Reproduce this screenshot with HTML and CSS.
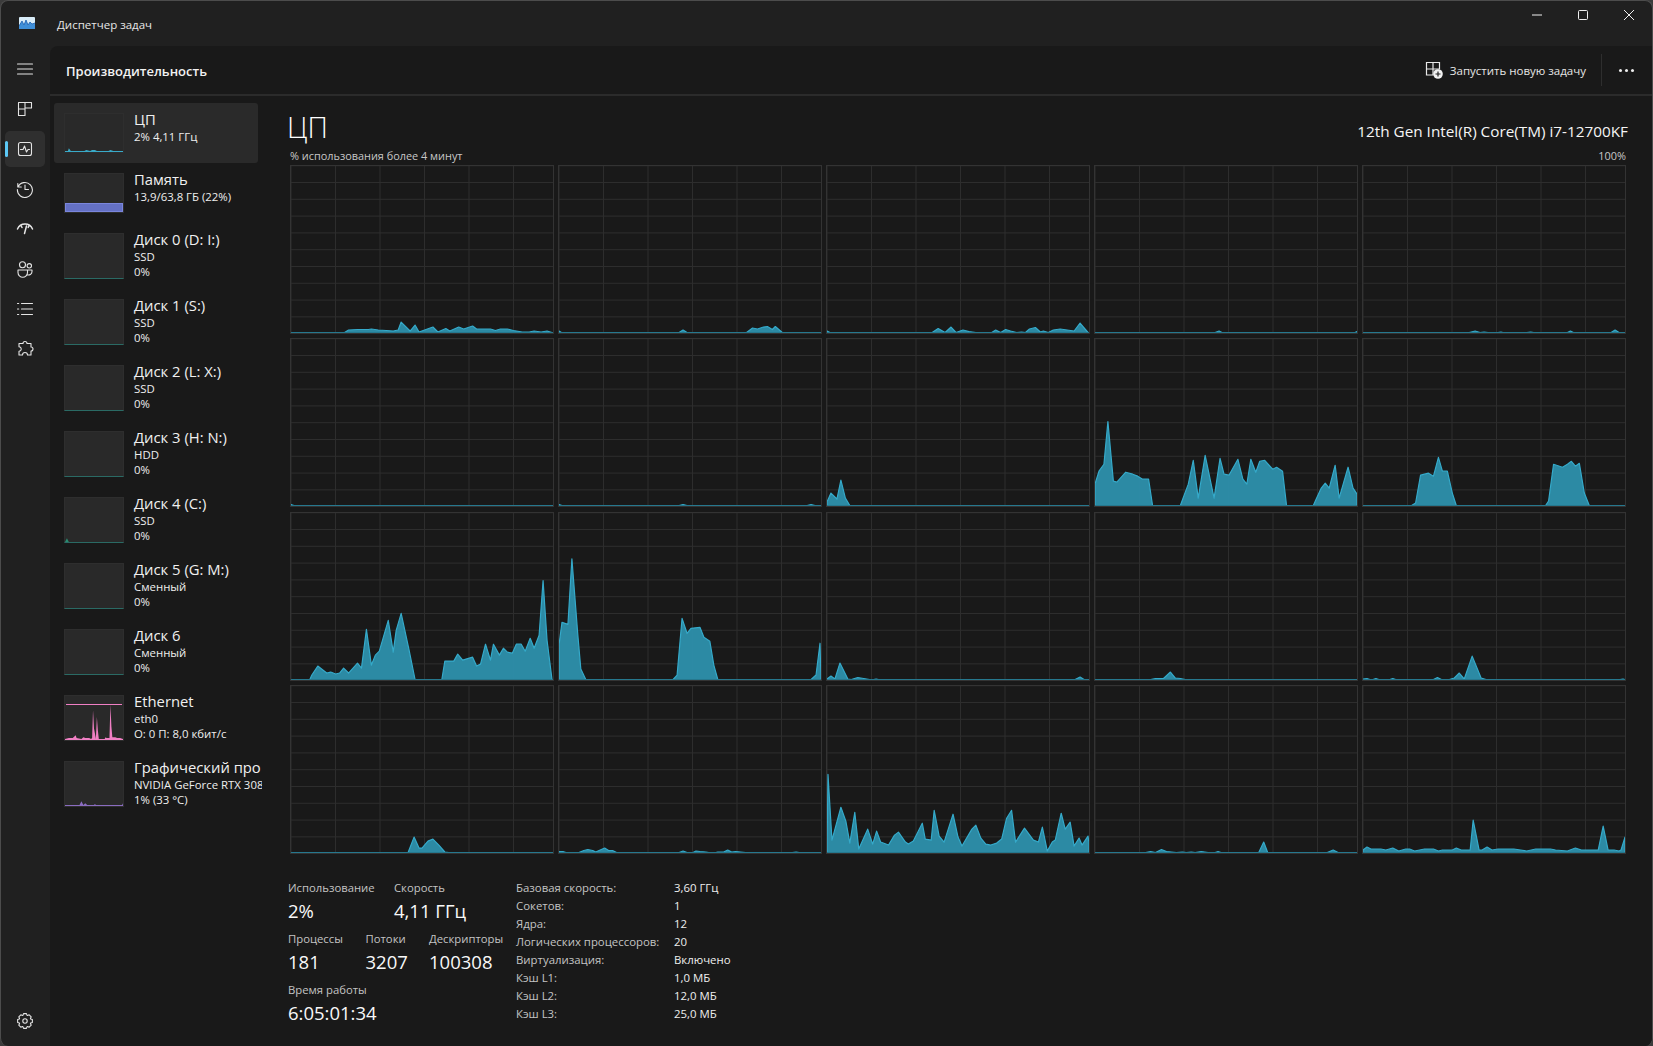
FILE: index.html
```html
<!DOCTYPE html>
<html lang="ru">
<head>
<meta charset="utf-8">
<title>Диспетчер задач</title>
<link rel="stylesheet" href="styles.css">
</head>
<body>
<div class="window">
  <header class="titlebar">
    <svg class="app-icon" viewBox="0 0 16 12"><rect width="16" height="12" rx="1" fill="#d8ecf8"/><path d="M0 9 3 4l2 4 2-5 2 5 2-3 2 2 3-1v6H0z" fill="#3f8fd8"/><path d="M0 9 3 4l2 4 2-5 2 5 2-3 2 2 3-1" fill="none" stroke="#1d5fb0" stroke-width=".8"/></svg>
    <span class="app-title">Диспетчер задач</span>
    <div class="win-controls">
      <svg class="win-btn" viewBox="0 0 12 12"><path d="M1 6h10" /></svg>
      <svg class="win-btn" viewBox="0 0 12 12"><rect x="1.500" y="1.500" width="9" height="9" rx="1"/></svg>
      <svg class="win-btn" viewBox="0 0 12 12"><path d="M1 1l10 10M11 1 1 11"/></svg>
    </div>
  </header>
  <div class="body">
    <nav class="nav">
      <svg class="nav-icon" viewBox="0 0 20 20"><path d="M2.500 5h15M2.500 10h15M2.500 15h15"/></svg>
      <svg class="nav-icon" viewBox="0 0 20 20"><path d="M3.500 3.500h13v5.500h-6.500v7.500h-6.500zM3.500 10h6.500M10 3.500v6.500"/></svg>
      <div class="nav-active">
        <svg class="nav-icon" viewBox="0 0 20 20"><rect x="3.500" y="3.500" width="13" height="13" rx="2"/><path d="M5.500 10.500h2.500l1.500-3.500 2 6 1.500-2.500h1.500"/></svg>
      </div>
      <svg class="nav-icon" viewBox="0 0 20 20"><path d="M2.800 4.500v3.500h3.500M3 8a7.500 7.500 0 1 1-.6 2.500M10 6v4.500h3.500"/></svg>
      <svg class="nav-icon nav-thick" viewBox="0 0 20 20"><path d="M2.500 10c1.500-3.500 4.500-5 7.500-5s6 1.500 7.500 5M9.500 14.500l2-7.500M6 6.500l1 2M14 6.500l-.8 2"/></svg>
      <svg class="nav-icon" viewBox="0 0 20 20"><circle cx="7.500" cy="5.800" r="3"/><circle cx="14.300" cy="6.800" r="2.200"/><path d="M3 11h9.500v2.500a4.500 4.500 0 0 1-9.500 0zM12.500 11h4.500v1.500a3.500 3.500 0 0 1-5 3.200"/></svg>
      <svg class="nav-icon" viewBox="0 0 20 20"><path d="M6.500 4.500h11M6.500 10h11M6.500 15.500h11M2.500 4.500h1.200M2.500 10h1.200M2.500 15.500h1.200"/></svg>
      <svg class="nav-icon" viewBox="0 0 20 20"><path d="M8 4.500a2 2 0 1 1 4 0h4v3.500a2 2 0 1 1 0 4v4h-3.500a2.500 2.500 0 0 0-5 0h-3.500v-3.800a2.200 2.200 0 1 0 0-4.400v-3.300z"/></svg>
      <svg class="nav-icon nav-settings" viewBox="0 0 20 20"><polygon points="17.36,8.57 17.36,11.43 15.64,12.05 15.44,12.54 16.22,14.19 14.19,16.22 12.54,15.44 12.05,15.64 11.43,17.36 8.57,17.36 7.95,15.64 7.46,15.44 5.81,16.22 3.78,14.19 4.56,12.54 4.36,12.05 2.64,11.43 2.64,8.57 4.36,7.95 4.56,7.46 3.78,5.81 5.81,3.78 7.46,4.56 7.95,4.36 8.57,2.64 11.43,2.64 12.05,4.36 12.54,4.56 14.19,3.78 16.22,5.81 15.44,7.46 15.64,7.95"/><circle cx="10" cy="10" r="2.200"/></svg>
    </nav>
    <main class="content">
      <div class="topbar">
        <h1 class="page-title">Производительность</h1>
        <button class="run-task">
          <svg class="run-icon" viewBox="0 0 18 18"><path d="M1.500 1.500h13v6.500h-6.500v6h-6.500zM1.500 8h6.500M8 1.500v6.500" fill="none" stroke="#e8e8e8" stroke-width="1.200"/><circle cx="13" cy="13" r="4.800" fill="#f2f2f2"/><path d="M13 10.500v5M10.500 13h5" stroke="#222" stroke-width="1.200"/></svg>
          Запустить новую задачу
        </button>
        <span class="topbar-sep"></span>
        <span class="dots"><i></i><i></i><i></i></span>
      </div>
      <div class="panes">
        <aside class="list">
          <div class="item item-selected">
            <div class="thumb thumb-short"><svg class="plot" viewBox="0 0 60 40" preserveAspectRatio="none"><polygon class="th-cpu" points="0,0 0,1 3,1 4,4 6,1 20,1 22,2 26,1 28,2 31,2 33,1 45,1 47,2 50,1 60,1 60,0"/></svg></div>
            <div class="item-text"><div class="item-name">ЦП</div><div class="item-sub">2% 4,11 ГГц</div></div>
          </div>
          <div class="item">
            <div class="thumb thumb-short"><div class="mem-fill"></div></div>
            <div class="item-text"><div class="item-name">Память</div><div class="item-sub">13,9/63,8 ГБ (22%)</div></div>
          </div>
          <div class="item">
            <div class="thumb thumb-disk"></div>
            <div class="item-text"><div class="item-name">Диск 0 (D: I:)</div><div class="item-sub">SSD</div><div class="item-sub">0%</div></div>
          </div>
          <div class="item">
            <div class="thumb thumb-disk"></div>
            <div class="item-text"><div class="item-name">Диск 1 (S:)</div><div class="item-sub">SSD</div><div class="item-sub">0%</div></div>
          </div>
          <div class="item">
            <div class="thumb thumb-disk"></div>
            <div class="item-text"><div class="item-name">Диск 2 (L: X:)</div><div class="item-sub">SSD</div><div class="item-sub">0%</div></div>
          </div>
          <div class="item">
            <div class="thumb thumb-disk"></div>
            <div class="item-text"><div class="item-name">Диск 3 (H: N:)</div><div class="item-sub">HDD</div><div class="item-sub">0%</div></div>
          </div>
          <div class="item">
            <div class="thumb thumb-disk"><svg class="plot" viewBox="0 0 60 46" preserveAspectRatio="none"><polygon class="th-disk" points="0,0 2,4 4,0"/></svg></div>
            <div class="item-text"><div class="item-name">Диск 4 (C:)</div><div class="item-sub">SSD</div><div class="item-sub">0%</div></div>
          </div>
          <div class="item">
            <div class="thumb thumb-disk"></div>
            <div class="item-text"><div class="item-name">Диск 5 (G: M:)</div><div class="item-sub">Сменный</div><div class="item-sub">0%</div></div>
          </div>
          <div class="item">
            <div class="thumb thumb-disk"></div>
            <div class="item-text"><div class="item-name">Диск 6</div><div class="item-sub">Сменный</div><div class="item-sub">0%</div></div>
          </div>
          <div class="item">
            <div class="thumb"><div class="eth-line"></div><svg class="plot" viewBox="0 0 60 46" preserveAspectRatio="none"><polygon class="th-eth" points="0,0 0,1 4,2 8,2 10,4 11,5 12,2 17,1 19,3 21,2 25,2 27,1 28,2 28,1 29,31 30,12 32,1 32,3 33,24 34,10 35,1 41,1 42,3 43,2 46,2 47,37 48,14 49,3 52,3 54,2 57,2 60,1 60,0"/></svg></div>
            <div class="item-text"><div class="item-name">Ethernet</div><div class="item-sub">eth0</div><div class="item-sub">О: 0 П: 8,0 кбит/с</div></div>
          </div>
          <div class="item">
            <div class="thumb"><svg class="plot" viewBox="0 0 60 46" preserveAspectRatio="none"><polygon class="th-gpu" points="0,0 0,1 15,1 17,5 19,1 21,3 23,1 30,1 31,2 32,1 59,1 60,3 60,0"/></svg></div>
            <div class="item-text"><div class="item-name">Графический про</div><div class="item-sub">NVIDIA GeForce RTX 308</div><div class="item-sub">1% (33 °C)</div></div>
          </div>
        </aside>
        <section class="detail">
          <div class="detail-head">
            <h2 class="detail-title">ЦП</h2>
            <span class="cpu-name">12th Gen Intel(R) Core(TM) i7-12700KF</span>
          </div>
          <div class="chart-caption"><span>% использования более 4 минут</span><span>100%</span></div>
          <div class="charts">
            <div class="chart"><svg class="plot" viewBox="0 0 264 168" preserveAspectRatio="none"><polygon points="0,0 0,.5 54,.5 58,3 67,3.5 78,3.5 81,4 88,3 96,2.500 103,2 108,3 111,11 120,2 125,8 129,1 143,6 148,1 156,4.500 160,2 169,6 174,4 183,7 187,4 201,4 206,2.500 211,4 218,4 224,2.500 233,1 240,1 245,2 252,1 258,2 264,0"/></svg></div>
            <div class="chart"><svg class="plot" viewBox="0 0 264 168" preserveAspectRatio="none"><polygon points="0,0 0,2 2.500,.5 121,.5 125,3 129,.5 189,.5 195,5 200,4 206,6 210,6.500 215,3.500 218,6.500 225,.5 264,.5 264,0"/></svg></div>
            <div class="chart"><svg class="plot" viewBox="0 0 264 168" preserveAspectRatio="none"><polygon points="0,0 0,2 3,.5 106,.5 112,4.500 119,.5 125,6 130,.5 137,3 143,1.500 150,.5 166,.5 170,3 175,.5 180,3.500 185,2 191,.5 196,1 200,.5 204,4 210,5.500 215,1 218,2 223,.5 228,3 235,4 242,3 249,2 255,10 263,.5 264,0"/></svg></div>
            <div class="chart"><svg class="plot" viewBox="0 0 264 168" preserveAspectRatio="none"><polygon points="0,0 0,.5 121,.5 125,2 128,.5 262,.5 264,1.500 264,0"/></svg></div>
            <div class="chart"><svg class="plot" viewBox="0 0 264 168" preserveAspectRatio="none"><polygon points="0,0 0,.5 107,.5 113,2 118,.5 122,1 126,.5 136,.5 139,1 141,.5 165,.5 169,1 172,.5 206,.5 209,2 212,.5 250,.5 254,3 258,.5 264,.5 264,0"/></svg></div>

            <div class="chart"><svg class="plot" viewBox="0 0 264 168" preserveAspectRatio="none"><polygon points="0,0 0,1.500 3,.5 264,.5 264,0"/></svg></div>
            <div class="chart"><svg class="plot" viewBox="0 0 264 168" preserveAspectRatio="none"><polygon points="0,0 0,1.500 3,.5 121,.5 125,1.500 129,.5 250,.5 254,1.500 258,.5 264,.5 264,0"/></svg></div>
            <div class="chart"><svg class="plot" viewBox="0 0 264 168" preserveAspectRatio="none"><polygon points="0,0 0,4 4,13 10,7 14,26 18.500,8 23,.5 264,.5 264,0"/></svg></div>
            <div class="chart"><svg class="plot" viewBox="0 0 264 168" preserveAspectRatio="none"><polygon points="0,0 0,22 4,35 9,42 13,85 18.500,25 22,24 31,34 38,32 43,30 48,27 54,27 58,.5 86,.5 94,22 99,46 104,8 111,51 120,8 126,48 130,32 135,31 144,47 149,27 153,22 157,47 162,34 166,45 171,46 179,37 183,39 189,35 193,.5 220,.5 222,5 228,18 232,23 236,18 242,41 246,8 255,39 260,18 264,12 264,0"/></svg></div>
            <div class="chart"><svg class="plot" viewBox="0 0 264 168" preserveAspectRatio="none"><polygon points="0,0 0,.5 49,.5 53,3 58,31 66,33 71,30 76,49 80,35 85,35 90,13 94,.5 184,.5 187,5 192,42 201,39 206,42 210,45 214,40 218,43 223,13 228,.5 264,.5 264,0"/></svg></div>

            <div class="chart"><svg class="plot" viewBox="0 0 264 168" preserveAspectRatio="none"><polygon points="0,0 0,.5 19,.5 21,5 27,14 36,7 40,8 45,6 49,7 53,12 58,7 67,17 71,12 76,51 81,15 85,25 89,29 98,60 103,28 106,50 111,67 119,30 125,.5 152,.5 155,19 164,19 168,26 173,20 183,23 187,14 191,16 196,36 201,20 204,36 210,25 214,32 218,28 223,27 227,36 232,36 236,29 241,42 245,32 250,45 254,100 258,40 263,.5 264,0"/></svg></div>
            <div class="chart"><svg class="plot" viewBox="0 0 264 168" preserveAspectRatio="none"><polygon points="0,0 0,35 3,58 9,56 13,122 19,45 22,11 27,.5 115,.5 119,5 124,62 129,47 133,52 142,53 146,43 152,39 156,15 160,.5 254,.5 259,5 263,37 264,0"/></svg></div>
            <div class="chart"><svg class="plot" viewBox="0 0 264 168" preserveAspectRatio="none"><polygon points="0,0 0,1 4,4 8,1 13,17 21,1 24.500,.5 31,2.500 37,1.500 43,.5 47,.5 49.500,1 52,.5 250,.5 255,3 259,.5 264,.5 264,0"/></svg></div>
            <div class="chart"><svg class="plot" viewBox="0 0 264 168" preserveAspectRatio="none"><polygon points="0,0 0,.5 56,.5 61,1.500 69,1.500 76,8 81,2 86,1.500 91,.5 264,.5 264,0"/></svg></div>
            <div class="chart"><svg class="plot" viewBox="0 0 264 168" preserveAspectRatio="none"><polygon points="0,0 0,1 4,1.500 7,.5 10,.5 13,1.500 16,.5 27,.5 30,1.500 33,.5 71,.5 75,2.500 79,.5 87,.5 92,2 97,7 102,1 110,24 119,2 124,.5 259,.5 262,1 264,.5 264,0"/></svg></div>

            <div class="chart"><svg class="plot" viewBox="0 0 264 168" preserveAspectRatio="none"><polygon points="0,0 0,.5 118,.5 124,16 129,5 132,5 138,12 143,14 149,8 155,1 159,.5 264,.5 264,0"/></svg></div>
            <div class="chart"><svg class="plot" viewBox="0 0 264 168" preserveAspectRatio="none"><polygon points="0,0 0,1.500 4,1.500 7,.5 20,.5 25,2.500 29,3.500 34,2.500 37,1 46,5 50,2.500 54,2.500 58,.5 121,.5 125,2 129,.5 135,.5 138,2 142,1.500 148,1 151,.5 158,.5 160,1 166,1 170,3 174,1 178,1.500 183,1 188,.5 235,.5 239,1 242,.5 264,.5 264,0"/></svg></div>
            <div class="chart"><svg class="plot" viewBox="0 0 264 168" preserveAspectRatio="none"><polygon points="0,0 1,79 5,13 14,46 19,32 23,10 28,41 32,4 41,24 46,9 50,22 54,11 62,8 68,18 72,21 79,11 82,9 87,12 96,30 99,14 105,13 108,43 113,17 118,11 127,39 132,16 136,7 146,24 150,28 155,15 160,9 165,8 171,10 176,14 181,35 186,43 190,11 199,25 208,13 213,11 217,26 222,2 227,11 230,13 236,40 240,24 245,31 249,7 254,15 257,8 263,17 264,10 264,0"/></svg></div>
            <div class="chart"><svg class="plot" viewBox="0 0 264 168" preserveAspectRatio="none"><polygon points="0,0 0,.5 51,.5 56,1.500 61,.5 67,3.500 72,1.500 77,1 82,.5 88,1 92,.5 97,1 101,.5 107,1.500 114,.5 121,.5 124,1.500 127,.5 165,.5 170,11 174,.5 234,.5 240,3 245,.5 264,.5 264,0"/></svg></div>
            <div class="chart"><svg class="plot" viewBox="0 0 264 168" preserveAspectRatio="none"><polygon points="0,0 0,3 4,6 8,4 18,4 23,3 30,5 36,2 43,4 47,4 52,2 62,4 71,4 76,2 80,3 90,3 94,5 99,3 108,3 111,33 117,3 120,3 125,6 130,3 136,4 152,4 165,2 174,4 189,4 194,3 206,2 214,5 220,3 237,3 242,27 247,3 253,3 258,2 260,3 264,16 264,0"/></svg></div>
          </div>
          <div class="stats">
            <div class="metrics">
              <div class="metric-row">
                <div class="metric m-usage"><div class="metric-label">Использование</div><div class="metric-value">2%</div></div>
                <div class="metric"><div class="metric-label">Скорость</div><div class="metric-value">4,11 ГГц</div></div>
              </div>
              <div class="metric-row">
                <div class="metric m-proc"><div class="metric-label">Процессы</div><div class="metric-value">181</div></div>
                <div class="metric m-thread"><div class="metric-label">Потоки</div><div class="metric-value">3207</div></div>
                <div class="metric"><div class="metric-label">Дескрипторы</div><div class="metric-value">100308</div></div>
              </div>
              <div class="metric-row">
                <div class="metric"><div class="metric-label">Время работы</div><div class="metric-value">6:05:01:34</div></div>
              </div>
            </div>
            <dl class="specs">
              <dt>Базовая скорость:</dt><dd>3,60 ГГц</dd>
              <dt>Сокетов:</dt><dd>1</dd>
              <dt>Ядра:</dt><dd>12</dd>
              <dt>Логических процессоров:</dt><dd>20</dd>
              <dt>Виртуализация:</dt><dd>Включено</dd>
              <dt>Кэш L1:</dt><dd>1,0 МБ</dd>
              <dt>Кэш L2:</dt><dd>12,0 МБ</dd>
              <dt>Кэш L3:</dt><dd>25,0 МБ</dd>
            </dl>
          </div>
        </section>
      </div>
    </main>
  </div>
</div>
</body>
</html>
```
FILE: styles.css
```css
* { box-sizing: border-box; }
html, body { margin: 0; height: 100%; background: #3b3b3b; overflow: hidden; }
body { font-family: "Open Sans", "Noto Sans", sans-serif; color: #fff; }

.window {
  width: 1653px; height: 1046px;
  display: flex; flex-direction: column;
  background: #202020;
  border: 1px solid #4c4c4c;
  border-bottom: 0;
  border-radius: 8px;
  overflow: hidden;
}

.titlebar { height: 45px; flex: none; display: flex; align-items: center; padding-left: 18px; position: relative; }
.app-icon { width: 16px; height: 12px; margin-right: 22px; margin-top: -1px; }
.app-title { font-size: 11.5px; color: #e6e6e6; margin-top: 1px; }
.win-controls { margin-left: auto; display: flex; height: 100%; align-items: flex-start; padding-right: 17px; gap: 34px; padding-top: 8px; }
.win-btn { width: 12px; height: 12px; fill: none; stroke: #f0f0f0; stroke-width: 1; }

.body { flex: 1; display: flex; min-height: 0; }

.nav { width: 49px; flex: none; position: relative; display: flex; flex-direction: column; align-items: center; padding: 13px 1px 0 0; }
.nav-icon { width: 20px; height: 20px; margin: 0 0 20px; fill: none; stroke: #e4e4e4; stroke-width: 1.100; stroke-linecap: round; stroke-linejoin: round; flex: none; }
.nav-thick { stroke-width: 1.500; }
.nav-active { width: 40px; height: 36px; margin: -8px 0 12px; background: #2f2f2f; border-radius: 5px; display: flex; align-items: center; justify-content: center; position: relative; flex: none; }
.nav-active .nav-icon { margin: 0; }
.nav-active::before { content: ""; position: absolute; left: 0; top: 10px; width: 3px; height: 16px; border-radius: 2px; background: #5cc8f5; }
.nav-settings { position: absolute; left: 14px; top: 965px; margin: 0; }

.content { flex: 1; min-width: 0; display: flex; flex-direction: column; background: #191919; border-top-left-radius: 8px; }
.topbar { height: 50px; flex: none; display: flex; align-items: center; border-bottom: 2px solid #2b2b2b; padding-left: 16px; padding-right: 18px; }
.page-title { font-size: 13px; font-weight: 600; margin: 1px 0 0; color: #f2f2f2; }
.run-task { margin-left: auto; display: flex; align-items: center; gap: 7px; background: none; border: 0; padding: 0; font: inherit; font-size: 11.500px; color: #e6e6e6; }
.run-icon { width: 18px; height: 18px; }
.topbar-sep { width: 1px; height: 32px; background: #2e2e2e; margin: 0 17px 0 15px; }
.dots { display: flex; gap: 3px; }
.dots i { width: 3px; height: 3px; border-radius: 50%; background: #eee; }

.panes { flex: 1; display: flex; min-height: 0; }
.list { width: 212px; flex: none; overflow: hidden; padding: 7px 0 0 4px; }
.item { width: 204px; display: flex; gap: 10px; padding: 10px; border-radius: 3px; white-space: nowrap; }
.item-selected { background: #2a2a2a; }
.thumb { width: 60px; height: 46px; flex: none; background: #292929; border: 1px solid #2e2e2e; position: relative; }
.thumb-short { height: 40px; }
.thumb-disk { border-bottom: 1px solid #2a6a64; }
.thumb .plot { position: absolute; left: 0; top: 0; width: 100%; height: 100%; }
.mem-fill { position: absolute; left: 0; right: 0; bottom: 0; height: 9px; background: #6470c4; border: 1px solid #7a86dc; }
.eth-line { position: absolute; left: 1px; right: 1px; top: 8px; height: 1px; background: #f07fc4; }
.th-cpu { fill: #39aac8; }
.th-disk { fill: #2a8a70; }
.th-eth { fill: #f07fc4; }
.th-gpu { fill: #8a6cc0; }
.item-text { min-width: 0; }
.item-name { font-size: 14.800px; line-height: 19px; margin: -3px 0 0; color: #f0f0f0; }
.item-sub { font-size: 11.400px; line-height: 15px; color: #eee; }

.detail { flex: 1; min-width: 0; padding: 0 26px 0 25px; }
.detail-head { height: 50px; display: flex; justify-content: space-between; align-items: flex-end; }
.detail-title { margin: 0; font-size: 28.500px; font-weight: 300; line-height: 38px; }
.cpu-name { font-size: 15.300px; line-height: 24px; margin-right: -2px; margin-bottom: 3px; color: #f5f5f5; }
.chart-caption { display: flex; justify-content: space-between; font-size: 10.900px; line-height: 16px; color: #c8c8c8; padding: 2px 0 0 3px; height: 19px; }
.charts { display: grid; grid-template-columns: repeat(5, 1fr); grid-auto-rows: 169px; gap: 4.330px 4px; margin-left: 3px; }
.chart {
  border: 1px solid #333;
  background-color: #191919;
  background-image:
    linear-gradient(to right, #2d2d2d 1px, transparent 1px),
    linear-gradient(to bottom, #2d2d2d 1px, transparent 1px);
  background-size: 44.500px 100%, 100% 16.800px;
  background-position: 44px 0, 0 16px;
  position: relative;
}
.chart::after { content: ""; position: absolute; left: 0; right: 0; bottom: 0; height: 1px; background: #26788e; }
.plot { display: block; width: 100%; height: 100%; transform: scaleY(-1); }
.chart polygon { fill: #2d8ea9; stroke: #36afd0; stroke-width: 1.200; stroke-linejoin: round; opacity: .97; }

.stats { display: flex; margin-top: 25px; padding-left: 1px; }
.metrics { width: 228px; flex: none; }
.metric-row { display: flex; height: 51px; }
.metric-label { font-size: 11.300px; line-height: 18px; color: #c4c4c4; white-space: nowrap; }
.metric-value { font-size: 18.500px; line-height: 27px; color: #f8f8f8; white-space: nowrap; }
.m-usage { width: 106px; }
.m-proc { width: 77.500px; }
.m-thread { width: 63.500px; }
.specs { margin: 0; display: grid; grid-template-columns: 158px auto; grid-auto-rows: 18px; font-size: 11.400px; line-height: 18px; }
.specs dt { color: #c4c4c4; }
.specs dd { margin: 0; color: #eee; }
```
